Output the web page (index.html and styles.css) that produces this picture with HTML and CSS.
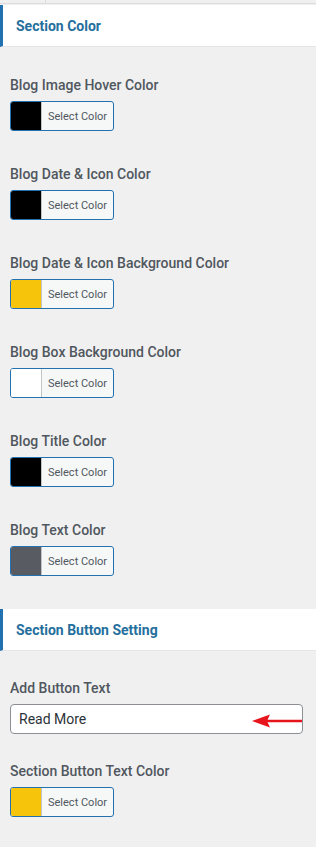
FILE: index.html
```html
<!DOCTYPE html>
<html>
<head>
<meta charset="utf-8">
<link rel="stylesheet" href="styles.css">
</head>
<body>
<div class="topstrip"><div class="topcell"></div></div>

<div class="section-head">Section Color</div>
<div class="group-list">
  <div class="field">
    <div class="label">Blog Image Hover Color</div>
    <button class="color-btn"><span class="swatch" style="background:#000000"></span><span class="btn-text">Select Color</span></button>
  </div>
  <div class="field">
    <div class="label">Blog Date &amp; Icon Color</div>
    <button class="color-btn"><span class="swatch" style="background:#000000"></span><span class="btn-text">Select Color</span></button>
  </div>
  <div class="field">
    <div class="label">Blog Date &amp; Icon Background Color</div>
    <button class="color-btn"><span class="swatch" style="background:#f7c40c"></span><span class="btn-text">Select Color</span></button>
  </div>
  <div class="field">
    <div class="label">Blog Box Background Color</div>
    <button class="color-btn"><span class="swatch" style="background:#ffffff"></span><span class="btn-text">Select Color</span></button>
  </div>
  <div class="field">
    <div class="label">Blog Title Color</div>
    <button class="color-btn"><span class="swatch" style="background:#000000"></span><span class="btn-text">Select Color</span></button>
  </div>
  <div class="field">
    <div class="label">Blog Text Color</div>
    <button class="color-btn"><span class="swatch" style="background:#585c62"></span><span class="btn-text">Select Color</span></button>
  </div>
</div>

<div class="section-head">Section Button Setting</div>
<div class="group-list tight">
  <div class="field">
    <div class="label">Add Button Text</div>
    <div class="input-wrap">
      <input class="text-input" type="text" value="Read More">
      <svg class="arrow" width="52" height="16" viewBox="0 0 52 16">
        <line x1="14" y1="8" x2="50" y2="8" stroke="#e8141c" stroke-width="2.5"/>
        <polygon points="0,8 18,1.5 15,8 18,14.5" fill="#e8141c"/>
      </svg>
    </div>
  </div>
  <div class="field">
    <div class="label">Section Button Text Color</div>
    <button class="color-btn"><span class="swatch" style="background:#f7c40c"></span><span class="btn-text">Select Color</span></button>
  </div>
</div>
</body>
</html>
```

FILE: styles.css
```css
html, body {
  margin: 0;
  padding: 0;
  background: #f0f0f1;
  font-family: Roboto, "Liberation Sans", sans-serif;
}
body {
  width: 316px;
  height: 847px;
  overflow: hidden;
}
.topstrip {
  height: 3px;
  border-bottom: 1px solid #dcdcde;
  background: #f0f0f1;
  display: flex;
}
.topcell {
  width: 45px;
  border-right: 1px solid #dcdcde;
}
.section-head {
  margin-top: 1px;
  height: 42px;
  background: #ffffff;
  border-left: 3px solid #2271b1;
  padding-left: 13px;
  display: flex;
  align-items: center;
  color: #256f9d;
  font-size: 14px;
  font-weight: 700;
  box-sizing: border-box;
  border-bottom: 1px solid #e6e6e8;
}
.group-list {
  display: flex;
  flex-direction: column;
  gap: 33px;
  padding: 28px 13px 32px 10px;
}
.group-list.tight {
  gap: 27px;
  padding-top: 27px;
}
.field {
  display: flex;
  flex-direction: column;
  align-items: flex-start;
  gap: 6px;
}
.label {
  font-size: 14px;
  font-weight: 500;
  line-height: 20px;
  color: #50575e;
}
.color-btn {
  display: flex;
  align-items: stretch;
  width: 104px;
  height: 30px;
  padding: 0;
  margin: 0;
  border: 1px solid #2271b1;
  border-radius: 3px;
  background: #f6f7f7;
  overflow: hidden;
  font-family: inherit;
  cursor: pointer;
}
.swatch {
  width: 30px;
  flex: none;
  border-right: 1px solid #c3c4c7;
}
.btn-text {
  flex: 1;
  display: flex;
  align-items: center;
  padding-left: 6px;
  font-size: 11px;
  color: #50575e;
}
.input-wrap {
  position: relative;
  width: 100%;
  height: 30px;
  display: flex;
}
.text-input {
  flex: 1;
  min-width: 0;
  height: 30px;
  box-sizing: border-box;
  margin: 0;
  border: 1px solid #8c8f94;
  border-radius: 4px;
  background: #fff;
  padding: 0 8px;
  font-family: inherit;
  font-size: 14px;
  color: #2c3338;
  outline: none;
}
.arrow {
  position: absolute;
  left: 242px;
  top: 9px;
}
```
